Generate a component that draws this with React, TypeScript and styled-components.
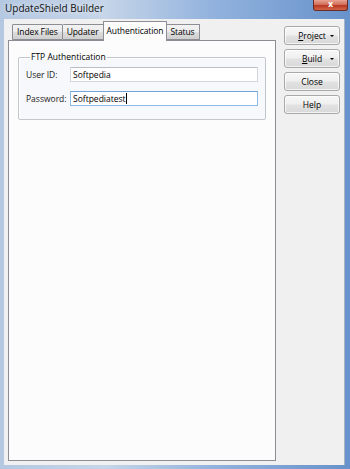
import React from "react";
import styled, { createGlobalStyle } from "styled-components";

const Global = createGlobalStyle`
  html, body { margin: 0; padding: 0; }
  body { width: 350px; height: 469px; overflow: hidden; font-family: "Open Sans", "Noto Sans", sans-serif; }
`;

const Window = styled.div`
  width: 350px;
  height: 469px;
  box-sizing: border-box;
  display: flex;
  flex-direction: column;
  background: linear-gradient(90deg, #b4c8e2 0%, #c6d5e8 30%, #93b3de 60%, #6792cb 100%);
  padding: 0 5px 4px 4px;
`;

const TitleBar = styled.div`
  height: 19px;
  display: flex;
  align-items: center;
  justify-content: space-between;
  position: relative;
`;

const Title = styled.div`
  font-size: 10px;
  color: #111;
  padding-left: 1px;
  margin-top: -3px;
  text-shadow: 0 0 6px rgba(255, 255, 255, 0.9);
`;

const CloseBtn = styled.div`
  position: absolute;
  right: -3px;
  top: 0;
  width: 35px;
  height: 11px;
  border-radius: 0 0 3px 3px;
  border: 1px solid #6b2a22;
  border-top: none;
  box-sizing: border-box;
  background: linear-gradient(180deg, #e8a291 0%, #d2705c 45%, #b93a22 55%, #d0654a 100%);
  color: #fff;
  font-family: "DejaVu Sans", sans-serif;
  font-weight: bold;
  font-size: 8px;
  line-height: 10px;
  text-align: center;
`;

const Client = styled.div`
  flex: 1;
  display: flex;
  background: #f0f0f0;
  border-right: 1px solid #a5b3c5;
  padding: 0 4px 4px 4px;
  box-sizing: border-box;
`;

const LeftCol = styled.div`
  width: 268px;
  display: flex;
  flex-direction: column;
`;

const TabStrip = styled.div`
  height: 21px;
  display: flex;
  align-items: flex-end;
  padding-left: 4px;
  position: relative;
  z-index: 1;
`;

const Tab = styled.div<{ $active?: boolean }>`
  box-sizing: border-box;
  height: ${(p) => (p.$active ? "20px" : "16px")};
  margin-bottom: ${(p) => (p.$active ? "-1px" : "0")};
  padding: ${(p) => (p.$active ? "3px 3px 0" : "1px 4px 0")};
  margin-left: ${(p) => (p.$active ? "-1px" : "0")};
  margin-right: ${(p) => (p.$active ? "-1px" : "0")};
  border: 1px solid #8c8e94;
  border-bottom: ${(p) => (p.$active ? "none" : "1px solid #8c8e94")};
  border-left: ${(p) => (p.$active ? "1px solid #8c8e94" : "none")};
  border-radius: 1px 1px 0 0;
  background: ${(p) =>
    p.$active ? "#fcfcfc" : "linear-gradient(180deg, #f2f2f2 0%, #ebebeb 50%, #dddddd 51%, #cfcfcf 100%)"};
  font-size: 8.5px;
  letter-spacing: -0.1px;
  color: #000;
  white-space: nowrap;
  position: relative;
  z-index: ${(p) => (p.$active ? 2 : 1)};
  &:first-child { border-left: 1px solid #8c8e94; }
`;

const Panel = styled.div`
  flex: 1;
  border: 1px solid #8c8e94;
  background: #fcfcfc;
  padding: 11px 9px 0 9px;
  box-sizing: border-box;
`;

const Group = styled.fieldset`
  margin: 0;
  border: 1px solid #c2c6cc;
  border-radius: 2px;
  box-shadow: inset 1px 1px 0 #ffffff;
  background: #f6f8fb;
  padding: 5px 7px 13px 7px;
  display: flex;
  flex-direction: column;
  gap: 9px;
`;

const Legend = styled.legend`
  font-size: 8.5px;
  color: #000;
  padding: 0 1px;
  margin-left: 4px;
  line-height: 10px;
`;

const Row = styled.div`
  display: flex;
  align-items: center;
`;

const Label = styled.div`
  width: 44px;
  font-size: 8.5px;
  color: #1a1a1a;
`;

const Field = styled.div<{ $focus?: boolean }>`
  width: 188px;
  height: 15px;
  box-sizing: border-box;
  border: 1px solid ${(p) => (p.$focus ? "#8dbbe8" : "#d3d6db")};
  border-top-color: ${(p) => (p.$focus ? "#6fa5db" : "#b9bdc4")};
  background: #fff;
  font-size: 8.5px;
  color: #000;
  padding-left: 2px;
  line-height: 13px;
  display: flex;
  align-items: center;
`;

const Caret = styled.span`
  display: inline-block;
  width: 1px;
  height: 11px;
  background: #000;
`;

const RightCol = styled.div`
  width: 56px;
  margin-left: 8px;
  padding-top: 7px;
  display: flex;
  flex-direction: column;
  gap: 4px;
`;

const Button = styled.div`
  height: 19px;
  box-sizing: border-box;
  border: 1px solid #a9a9a9;
  border-radius: 3px;
  background: linear-gradient(180deg, #f7f7f7 0%, #efefef 48%, #e2e2e2 52%, #d8d8d8 100%);
  box-shadow: inset 0 0 0 1px rgba(255, 255, 255, 0.7);
  font-size: 8.5px;
  color: #000;
  display: flex;
  align-items: center;
  justify-content: center;
  position: relative;
`;

const Arrow = styled.span`
  position: absolute;
  right: 5px;
  top: 8px;
  width: 0;
  height: 0;
  border-left: 2px solid transparent;
  border-right: 2px solid transparent;
  border-top: 2px solid #000;
`;

const Key = styled.span`
  text-decoration: underline;
`;

export default function App() {
  return (
    <>
      <Global />
      <Window>
        <TitleBar>
          <Title>UpdateShield Builder</Title>
          <CloseBtn>x</CloseBtn>
        </TitleBar>
        <Client>
          <LeftCol>
            <TabStrip>
              <Tab>Index Files</Tab>
              <Tab>Updater</Tab>
              <Tab $active>Authentication</Tab>
              <Tab>Status</Tab>
            </TabStrip>
            <Panel>
              <Group>
                <Legend>FTP Authentication</Legend>
                <Row>
                  <Label>User ID:</Label>
                  <Field>Softpedia</Field>
                </Row>
                <Row>
                  <Label>Password:</Label>
                  <Field $focus>
                    Softpediatest
                    <Caret />
                  </Field>
                </Row>
              </Group>
            </Panel>
          </LeftCol>
          <RightCol>
            <Button>
              <span>
                <Key>P</Key>roject
              </span>
              <Arrow />
            </Button>
            <Button>
              <span>
                <Key>B</Key>uild
              </span>
              <Arrow />
            </Button>
            <Button>Close</Button>
            <Button>Help</Button>
          </RightCol>
        </Client>
      </Window>
    </>
  );
}
